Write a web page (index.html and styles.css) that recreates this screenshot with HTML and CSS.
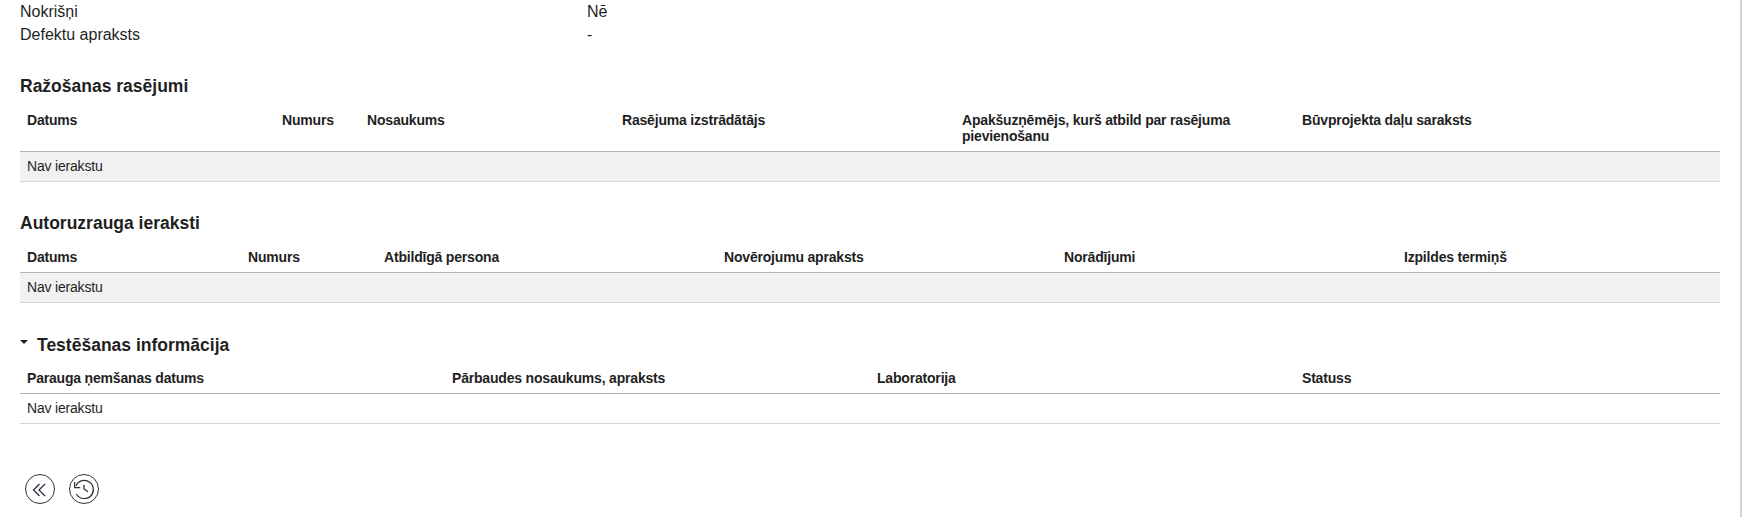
FILE: index.html
```html
<!DOCTYPE html>
<html lang="lv">
<head>
    <meta charset="UTF-8">
    <meta name="viewport" content="width=device-width, initial-scale=1.0">
    <title>Testēšanas informācija</title>
    <link rel="stylesheet" href="styles.css">
</head>
<body>

    <div class="container">
        <div class="info">
            <div class="info-row">
                <span>Nokrišņi</span>
                <span>Nē</span>
            </div>
            <div class="info-row">
                <span>Defektu apraksts</span>
                <span>-</span>
            </div>
        </div>

        <h2>Ražošanas rasējumi</h2>
        <table class="tabula">
            <colgroup>
                <col class="w15"><col class="w5"><col class="w15"><col class="w20"><col class="w20"><col class="w25">
            </colgroup>
            <thead>
                <tr>
                    <th>Datums</th>
                    <th>Numurs</th>
                    <th>Nosaukums</th>
                    <th>Rasējuma izstrādātājs</th>
                    <th>Apakšuzņēmējs, kurš atbild par rasējuma pievienošanu</th>
                    <th>Būvprojekta daļu saraksts</th>
                </tr>
            </thead>
            <tbody>
                <tr class="tuksa"><td colspan="6">Nav ierakstu</td></tr>
            </tbody>
        </table>

        <h2>Autoruzrauga ieraksti</h2>
        <table class="tabula">
            <colgroup>
                <col class="w13"><col class="w8"><col class="w20"><col class="w20"><col class="w20"><col class="w19">
            </colgroup>
            <thead>
                <tr>
                    <th>Datums</th>
                    <th>Numurs</th>
                    <th>Atbildīgā persona</th>
                    <th>Novērojumu apraksts</th>
                    <th>Norādījumi</th>
                    <th>Izpildes termiņš</th>
                </tr>
            </thead>
            <tbody>
                <tr class="tuksa"><td colspan="6">Nav ierakstu</td></tr>
            </tbody>
        </table>

        <h2 class="atverams"><span class="bultina"></span>Testēšanas informācija</h2>
        <table class="tabula">
            <colgroup>
                <col class="w25"><col class="w25"><col class="w25"><col class="w25">
            </colgroup>
            <thead>
                <tr>
                    <th>Parauga ņemšanas datums</th>
                    <th>Pārbaudes nosaukums, apraksts</th>
                    <th>Laboratorija</th>
                    <th>Statuss</th>
                </tr>
            </thead>
            <tbody>
                <tr><td colspan="4">Nav ierakstu</td></tr>
            </tbody>
        </table>

        <div class="pogas">
            <button type="button" class="poga" title="Atpakaļ">
                <svg viewBox="0 0 16 16" width="16" height="16" fill="none" stroke="#2b2f45" stroke-width="1.3">
                    <path d="M7.5 3 1.5 9l6 6M13 3 7 9l6 6"/>
                </svg>
            </button>
            <button type="button" class="poga" title="Vēsture">
                <svg viewBox="0 0 20 20" width="20" height="20" fill="none" stroke="#333" stroke-width="1.3">
                    <path d="M2 6.7A9.1 9.1 0 1 1 2.3 15"/>
                    <path d="M.6 3v5.6h5.6"/>
                    <path d="M10 5.7V10l4 2.7"/>
                </svg>
            </button>
        </div>
    </div>

</body>
</html>
```

FILE: styles.css
```css
html, body {
    height: 100%;
}
body {
    font-family: "Liberation Sans", Arial, sans-serif;
    margin: 0;
    color: #1f1f1f;
    background: white;
    border-right: 2px solid #d4d4d4;
    box-sizing: border-box;
    overflow: hidden;
}
.container {
    padding: 0 20px;
    width: 1740px;
    box-sizing: border-box;
}
.info {
    margin-bottom: -1px;
}
.info-row {
    display: grid;
    grid-template-columns: 567px 1fr;
    font-size: 16px;
    line-height: 23px;
}
h2 {
    font-size: 17.5px;
    font-weight: bold;
    line-height: 22px;
    margin: 30px 0 8px;
}
.atverams {
    display: flex;
    align-items: center;
    margin: 31px 0 7px;
}
.bultina {
    width: 0;
    height: 0;
    border-left: 4.5px solid transparent;
    border-right: 4.5px solid transparent;
    border-top: 4px solid #1f1f1f;
    margin-right: 9px;
    margin-bottom: 6px;
}
.tabula {
    width: 100%;
    border-collapse: collapse;
    table-layout: fixed;
    font-size: 14px;
    letter-spacing: -0.19px;
}
th {
    text-align: left;
    vertical-align: top;
    padding: 7px 40px 7px 7px;
    line-height: 16px;
    border-bottom: 1px solid #b5b5b5;
}
td {
    padding: 6px 7px 7px;
    line-height: 16px;
    border-bottom: 1px solid #d4d4d4;
}
.tuksa td {
    background: #f1f1f1;
}
.w5 { width: 5%; }
.w8 { width: 8%; }
.w13 { width: 13%; }
.w15 { width: 15%; }
.w19 { width: 19%; }
.w20 { width: 20%; }
.w25 { width: 25%; }
.pogas {
    display: flex;
    gap: 14px;
    margin: 50px 0 0 5px;
}
.poga {
    width: 30px;
    height: 30px;
    padding: 0;
    display: flex;
    align-items: center;
    justify-content: center;
    background: white;
    border: 1px solid #333;
    border-radius: 50%;
    cursor: pointer;
}
```
